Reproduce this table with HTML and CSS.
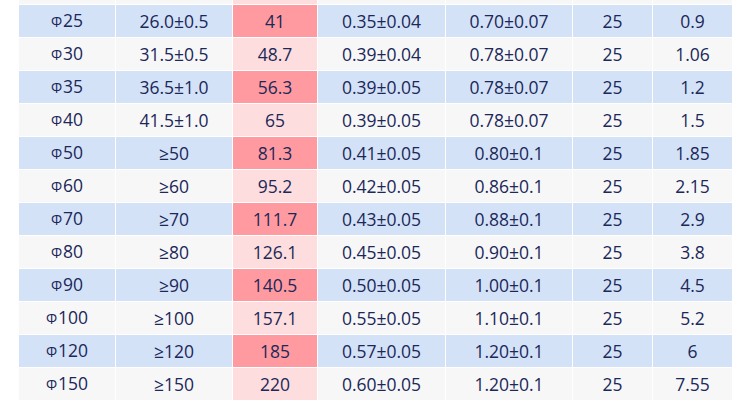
FILE: index.html
```html
<!DOCTYPE html>
<html lang="zh">
<head>
<meta charset="utf-8">
<title>规格表</title>
<link rel="stylesheet" href="styles.css">
</head>
<body>
<table class="spec">
  <colgroup>
    <col class="c1"><col class="c2"><col class="c3"><col class="c4"><col class="c5"><col class="c6"><col class="c7">
  </colgroup>
  <tbody>
    <tr class="odd"><td></td><td></td><td class="hl"></td><td></td><td></td><td></td><td></td></tr>
    <tr class="even"><td><span class="phi">Φ</span>25</td><td>26.0±0.5</td><td class="hl">41</td><td>0.35±0.04</td><td>0.70±0.07</td><td>25</td><td>0.9</td></tr>
    <tr class="odd"><td><span class="phi">Φ</span>30</td><td>31.5±0.5</td><td class="hl">48.7</td><td>0.39±0.04</td><td>0.78±0.07</td><td>25</td><td>1.06</td></tr>
    <tr class="even"><td><span class="phi">Φ</span>35</td><td>36.5±1.0</td><td class="hl">56.3</td><td>0.39±0.05</td><td>0.78±0.07</td><td>25</td><td>1.2</td></tr>
    <tr class="odd"><td><span class="phi">Φ</span>40</td><td>41.5±1.0</td><td class="hl">65</td><td>0.39±0.05</td><td>0.78±0.07</td><td>25</td><td>1.5</td></tr>
    <tr class="even"><td><span class="phi">Φ</span>50</td><td>≥50</td><td class="hl">81.3</td><td>0.41±0.05</td><td>0.80±0.1</td><td>25</td><td>1.85</td></tr>
    <tr class="odd"><td><span class="phi">Φ</span>60</td><td>≥60</td><td class="hl">95.2</td><td>0.42±0.05</td><td>0.86±0.1</td><td>25</td><td>2.15</td></tr>
    <tr class="even"><td><span class="phi">Φ</span>70</td><td>≥70</td><td class="hl">111.7</td><td>0.43±0.05</td><td>0.88±0.1</td><td>25</td><td>2.9</td></tr>
    <tr class="odd"><td><span class="phi">Φ</span>80</td><td>≥80</td><td class="hl">126.1</td><td>0.45±0.05</td><td>0.90±0.1</td><td>25</td><td>3.8</td></tr>
    <tr class="even"><td><span class="phi">Φ</span>90</td><td>≥90</td><td class="hl">140.5</td><td>0.50±0.05</td><td>1.00±0.1</td><td>25</td><td>4.5</td></tr>
    <tr class="odd"><td><span class="phi">Φ</span>100</td><td>≥100</td><td class="hl">157.1</td><td>0.55±0.05</td><td>1.10±0.1</td><td>25</td><td>5.2</td></tr>
    <tr class="even"><td><span class="phi">Φ</span>120</td><td>≥120</td><td class="hl">185</td><td>0.57±0.05</td><td>1.20±0.1</td><td>25</td><td>6</td></tr>
    <tr class="odd"><td><span class="phi">Φ</span>150</td><td>≥150</td><td class="hl">220</td><td>0.60±0.05</td><td>1.20±0.1</td><td>25</td><td>7.55</td></tr>
  </tbody>
</table>
</body>
</html>
```

FILE: styles.css
```css
html, body {
  margin: 0;
  padding: 0;
  background: #ffffff;
  overflow: hidden;
}

.spec {
  margin: -29px 0 0 18px;
  border-collapse: separate;
  border-spacing: 1px;
  table-layout: fixed;
  font-family: "Open Sans", "Noto Sans CJK SC", sans-serif;
  font-size: 17.5px;
  color: #1b2858;
}

.c1 { width: 96px; }
.c2 { width: 116px; }
.c3 { width: 84px; }
.c4 { width: 127px; }
.c5 { width: 126px; }
.c6 { width: 79px; }
.c7 { width: 79px; }

.spec td {
  height: 32px;
  padding: 0;
  text-align: center;
  vertical-align: middle;
  line-height: 20px;
  white-space: nowrap;
}

.odd td { background: #f7f7f8; }
.even td { background: #d4e2f8; }
.odd td.hl { background: #fdddde; }
.even td.hl { background: #ff9ba0; }

.phi {
  font-size: 14px;
  margin-right: 1px;
}
```
